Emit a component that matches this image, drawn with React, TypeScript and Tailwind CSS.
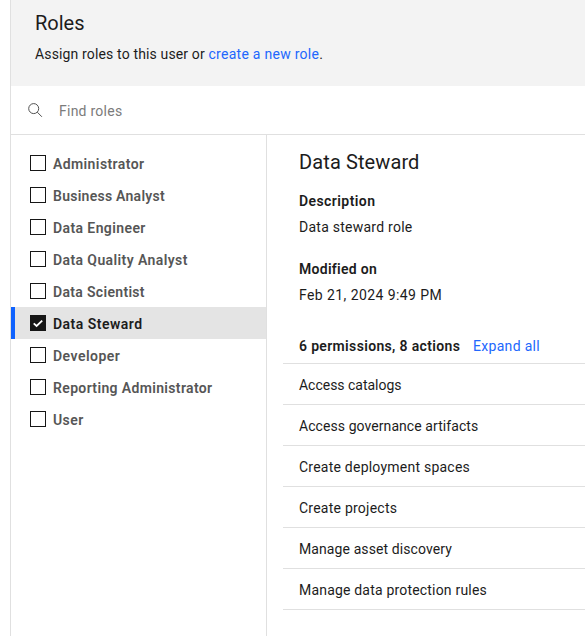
const roles = [
  { name: 'Administrator', tracking: 'tracking-[0.4px]' },
  { name: 'Business Analyst', tracking: 'tracking-[0.26px]' },
  { name: 'Data Engineer', tracking: 'tracking-[0.4px]' },
  { name: 'Data Quality Analyst', tracking: 'tracking-[0.4px]' },
  { name: 'Data Scientist', tracking: 'tracking-[0.32px]' },
  { name: 'Data Steward', tracking: 'tracking-[0.48px]', selected: true },
  { name: 'Developer', tracking: 'tracking-[0.48px]' },
  { name: 'Reporting Administrator', tracking: 'tracking-[0.352px]' },
  { name: 'User', tracking: 'tracking-[0.4px]' },
];

const permissions = [
  { name: 'Access catalogs', tracking: 'tracking-[-0.02px]' },
  { name: 'Access governance artifacts', tracking: 'tracking-[0.07px]' },
  { name: 'Create deployment spaces', tracking: 'tracking-[0.23px]' },
  { name: 'Create projects', tracking: 'tracking-[0.24px]' },
  { name: 'Manage asset discovery', tracking: 'tracking-[0.1px]' },
  { name: 'Manage data protection rules', tracking: 'tracking-[0.19px]' },
];

function SearchIcon() {
  return (
    <svg width="16" height="16" viewBox="0 0 16 16" fill="none" stroke="#525252" aria-hidden="true">
      <circle cx="6.7" cy="6.6" r="5" />
      <path d="M10.3 10.2L14.9 14.8" />
    </svg>
  );
}

function Checkbox({ checked }: { checked?: boolean }) {
  return (
    <span
      role="checkbox"
      aria-checked={!!checked}
      className={
        checked
          ? 'flex size-4 shrink-0 items-center justify-center bg-[#161616]'
          : 'size-4 shrink-0 border border-[#161616] bg-white'
      }
    >
      {checked && (
        <svg width="16" height="16" viewBox="0 0 16 16" fill="none" stroke="#fff" strokeWidth="1.8" aria-hidden="true">
          <path d="M3.7 8.3L6.6 11L12.2 5.6" />
        </svg>
      )}
    </span>
  );
}

export default function App() {
  return (
    <div className="h-[636px] w-[585px] overflow-hidden bg-white pl-2.5 font-[Roboto,sans-serif] text-sm text-[#1c1c1c]">
      <div className="flex h-full flex-col border-l border-[#e0e0e0]">
        <header className="h-[86px] shrink-0 bg-[#f3f3f3] pt-[9px] pl-6">
          <h1 className="text-xl leading-7">Roles</h1>
          <p className="mt-[7px] leading-5 tracking-[0.146px]">
            Assign roles to this user or{' '}
            <a className="tracking-[0.27px] text-[#2267fd]">create a new role</a>.
          </p>
        </header>
        <div className="flex h-[49px] shrink-0 items-center border-b border-[#e0e0e0] pl-4 text-[#7b7b7b]">
          <SearchIcon />
          <span className="mt-0.5 ml-4 leading-5 tracking-[0.25px]">Find roles</span>
        </div>
        <div className="flex min-h-0 flex-1">
          <ul className="w-64 shrink-0 border-r border-[#e0e0e0] pt-3">
            {roles.map((role) => (
              <li
                key={role.name}
                className={
                  role.selected
                    ? 'flex h-8 items-center border-l-4 border-[#0f62fe] bg-[#e4e4e4] pl-[15px] font-semibold'
                    : 'flex h-8 items-center border-l-4 border-transparent pl-[15px] font-semibold text-[#565656]'
                }
              >
                <Checkbox checked={role.selected} />
                <span className={'mt-0.5 ml-[7px] leading-5 ' + role.tracking}>{role.name}</span>
              </li>
            ))}
          </ul>
          <section className="flex-1 pt-[13px] pl-4">
            <div className="pl-4">
              <h2 className="text-xl leading-7 tracking-[0.11px]">Data Steward</h2>
              <h3 className="mt-[15px] leading-5 font-semibold tracking-[0.42px]">Description</h3>
              <p className="mt-1.5 leading-5 tracking-[0.25px]">Data steward role</p>
              <h3 className="mt-[22px] leading-5 font-semibold tracking-[0.29px]">Modified on</h3>
              <p className="mt-1.5 leading-5 tracking-[0.42px]">Feb 21, 2024 9:49 PM</p>
            </div>
            <div className="mt-[31px] flex h-[28px] items-start border-b border-[#e0e0e0] pl-4 leading-5">
              <h3 className="w-[174px] font-semibold tracking-[0.34px]">6 permissions, 8 actions</h3>
              <a className="tracking-[0.31px] text-[#2267fd]">Expand all</a>
            </div>
            <ul>
              {permissions.map((permission) => (
                <li key={permission.name} className="flex h-[41px] items-center border-b border-[#e0e0e0] pt-0.5 pl-4">
                  <span className={'leading-5 ' + permission.tracking}>{permission.name}</span>
                </li>
              ))}
            </ul>
          </section>
        </div>
      </div>
    </div>
  );
}
